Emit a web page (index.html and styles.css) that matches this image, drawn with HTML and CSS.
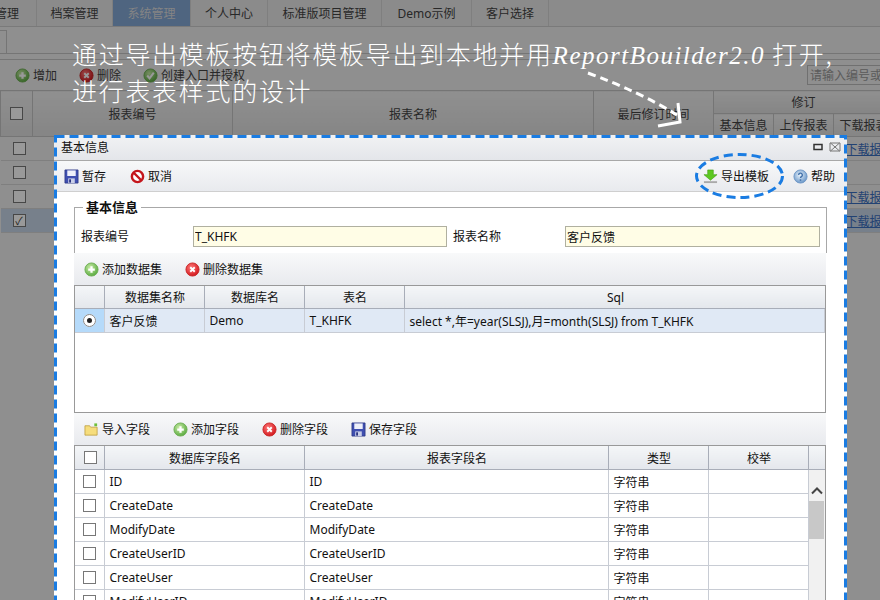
FILE: index.html
```html
<!DOCTYPE html>
<html lang="zh-CN">

<head>
    <meta charset="UTF-8">
    <title>基本信息</title>
    <link rel="stylesheet" href="styles.css">
</head>

<body>
    <svg class="icon-defs" width="0" height="0">
        <defs>
            <radialGradient id="g-green" cx="40%" cy="35%" r="70%">
                <stop offset="0" stop-color="#c8eba6"/>
                <stop offset="1" stop-color="#55a83c"/>
            </radialGradient>
            <radialGradient id="g-red" cx="40%" cy="35%" r="70%">
                <stop offset="0" stop-color="#f77"/>
                <stop offset="1" stop-color="#d0141a"/>
            </radialGradient>
            <radialGradient id="g-blue" cx="45%" cy="40%" r="65%">
                <stop offset="0" stop-color="#e8f2fb"/>
                <stop offset="1" stop-color="#5f8fc4"/>
            </radialGradient>
            <symbol id="i-add" viewBox="0 0 16 16">
                <circle cx="8" cy="8" r="7" fill="url(#g-green)" stroke="#6faf55"/>
                <path d="M8 4.5v7M4.5 8h7" stroke="#fff" stroke-width="2.4"/>
            </symbol>
            <symbol id="i-del" viewBox="0 0 16 16">
                <circle cx="8" cy="8" r="7" fill="url(#g-red)" stroke="#c92a2a"/>
                <path d="M5.6 5.6l4.8 4.8M10.4 5.6l-4.8 4.8" stroke="#fff" stroke-width="2"/>
            </symbol>
            <symbol id="i-ok" viewBox="0 0 16 16">
                <circle cx="8" cy="8" r="7" fill="url(#g-green)" stroke="#6faf55"/>
                <path d="M4.5 8l2.5 3 4.5-6" fill="none" stroke="#fff" stroke-width="2.2"/>
            </symbol>
            <symbol id="i-save" viewBox="0 0 16 16">
                <path d="M1 1h14v14H1z" fill="#3f4fb0" stroke="#2a3480" stroke-width=".8"/>
                <path d="M3.5 1.5h9v6h-9z" fill="#eef0fa"/>
                <path d="M4.5 10h7v5h-7z" fill="#c9cfe8"/>
                <path d="M5.5 11h2v3.500h-2z" fill="#2a3480"/>
            </symbol>
            <symbol id="i-cancel" viewBox="0 0 16 16">
                <circle cx="8" cy="8" r="6" fill="#fff" stroke="#c4161c" stroke-width="2.600"/>
                <path d="M4 4l8 8" stroke="#c4161c" stroke-width="2.600"/>
            </symbol>
            <symbol id="i-export" viewBox="0 0 16 16">
                <path d="M5 1h6v5h4l-7 6-7-6h4z" fill="#5cc820" stroke="#3f9a10" stroke-width=".6"/>
                <path d="M1 13h14v2H1z" fill="#a9a9a9"/>
            </symbol>
            <symbol id="i-help" viewBox="0 0 16 16">
                <circle cx="8" cy="8" r="7" fill="url(#g-blue)" stroke="#6f97c6"/>
                <path d="M6 6.500a2 2 0 1 1 3 1.700c-.7.4-1 .8-1 1.500" fill="none" stroke="#3f6ea8" stroke-width="1.400"/>
                <path d="M7.200 11h1.600v1.600H7.200z" fill="#3f6ea8"/>
            </symbol>
            <symbol id="i-folder" viewBox="0 0 16 16">
                <path d="M1 4h5l1 1.500h7V14H1z" fill="#f6dd7c" stroke="#b99a3a" stroke-width=".8"/>
                <path d="M11 1.500h3v3h-3z" fill="#6fbf3a"/>
            </symbol>
        </defs>
    </svg>

    <!-- page behind the dialog -->
    <div class="page">
        <nav class="main-tabs">
            <a class="main-tab tab-cut">管理</a>
            <a class="main-tab tab-76">档案管理</a>
            <a class="main-tab tab-78 active">系统管理</a>
            <a class="main-tab tab-77">个人中心</a>
            <a class="main-tab tab-114">标准版项目管理</a>
            <a class="main-tab tab-90">Demo示例</a>
            <a class="main-tab tab-77">客户选择</a>
        </nav>
        <div class="sub-tabs"><span class="sub-tab"></span></div>
        <div class="page-toolbar">
            <span class="tool"><svg class="ico"><use href="#i-add"/></svg>增加</span>
            <span class="tool"><svg class="ico"><use href="#i-del"/></svg>删除</span>
            <span class="tool"><svg class="ico"><use href="#i-ok"/></svg>创建入口并授权</span>
            <input class="search" placeholder="请输入编号或">
        </div>
        <table class="page-grid">
            <colgroup>
                <col class="pc-check"><col class="pc-no"><col class="pc-name"><col class="pc-time">
                <col class="pc-sub"><col class="pc-sub"><col class="pc-sub">
            </colgroup>
            <thead>
                <tr>
                    <th rowspan="2"><span class="check"></span></th>
                    <th rowspan="2">报表编号</th>
                    <th rowspan="2">报表名称</th>
                    <th rowspan="2">最后修订时间</th>
                    <th colspan="3">修订</th>
                </tr>
                <tr><th>基本信息</th><th>上传报表</th><th>下载报表</th></tr>
            </thead>
            <tbody>
                <tr><td><span class="check"></span></td><td></td><td></td><td></td><td></td><td></td><td><a class="dl">下载报表</a></td></tr>
                <tr><td><span class="check"></span></td><td></td><td></td><td></td><td></td><td></td><td></td></tr>
                <tr><td><span class="check"></span></td><td></td><td></td><td></td><td></td><td></td><td><a class="dl">下载报表</a></td></tr>
                <tr class="picked"><td><span class="check">✓</span></td><td></td><td></td><td></td><td></td><td></td><td><a class="dl">下载报表</a></td></tr>
            </tbody>
        </table>
    </div>
    <div class="mask"></div>

    <!-- dialog -->
    <section class="dialog">
        <header class="dialog-title">
            <span>基本信息</span>
            <span class="win-btns">
                <svg width="10" height="10" viewBox="0 0 10 10"><path d="M1 2.500h8v5H1z" fill="none" stroke="#333" stroke-width="1.500"/></svg>
                <svg width="12" height="10" viewBox="0 0 12 10"><path d="M1.500 1l9 8M10.500 1l-9 8M1 1h10v8H1z" fill="none" stroke="#777"/></svg>
            </span>
        </header>
        <div class="dialog-toolbar">
            <span class="tool"><svg class="ico"><use href="#i-save"/></svg>暂存</span>
            <span class="tool"><svg class="ico"><use href="#i-cancel"/></svg>取消</span>
            <span class="spacer"></span>
            <span class="tool"><svg class="ico"><use href="#i-export"/></svg>导出模板</span>
            <span class="tool"><svg class="ico"><use href="#i-help"/></svg>帮助</span>
        </div>
        <div class="dialog-body">
            <fieldset class="info">
                <legend>基本信息</legend>
                <div class="info-row">
                    <label class="info-label">报表编号</label>
                    <input class="info-input" value="T_KHFK">
                    <label class="info-label">报表名称</label>
                    <input class="info-input" value="客户反馈">
                </div>
            </fieldset>

            <div class="grid-toolbar">
                <span class="tool"><svg class="ico"><use href="#i-add"/></svg>添加数据集</span>
                <span class="tool"><svg class="ico"><use href="#i-del"/></svg>删除数据集</span>
            </div>
            <div class="dataset">
                <table class="grid">
                    <colgroup>
                        <col class="c-check"><col class="c-100"><col class="c-100"><col class="c-100"><col>
                    </colgroup>
                    <thead>
                        <tr><th></th><th>数据集名称</th><th>数据库名</th><th>表名</th><th>Sql</th></tr>
                    </thead>
                    <tbody>
                        <tr class="selected">
                            <td class="radio-cell"><span class="radio"></span></td>
                            <td>客户反馈</td>
                            <td>Demo</td>
                            <td>T_KHFK</td>
                            <td>select *,年=year(SLSJ),月=month(SLSJ) from T_KHFK</td>
                        </tr>
                    </tbody>
                </table>
            </div>

            <div class="grid-toolbar">
                <span class="tool"><svg class="ico"><use href="#i-folder"/></svg>导入字段</span>
                <span class="tool"><svg class="ico"><use href="#i-add"/></svg>添加字段</span>
                <span class="tool"><svg class="ico"><use href="#i-del"/></svg>删除字段</span>
                <span class="tool"><svg class="ico"><use href="#i-save"/></svg>保存字段</span>
            </div>
            <div class="fields">
                <table class="grid fields-table">
                    <colgroup>
                        <col class="c-check"><col class="c-200"><col class="c-304"><col class="c-100"><col class="c-100">
                    </colgroup>
                    <thead>
                        <tr><th><span class="check"></span></th><th>数据库字段名</th><th>报表字段名</th><th>类型</th><th>校举</th></tr>
                    </thead>
                    <tbody>
                        <tr><td class="check-cell"><span class="check"></span></td><td>ID</td><td>ID</td><td>字符串</td><td></td></tr>
                        <tr><td class="check-cell"><span class="check"></span></td><td>CreateDate</td><td>CreateDate</td><td>字符串</td><td></td></tr>
                        <tr><td class="check-cell"><span class="check"></span></td><td>ModifyDate</td><td>ModifyDate</td><td>字符串</td><td></td></tr>
                        <tr><td class="check-cell"><span class="check"></span></td><td>CreateUserID</td><td>CreateUserID</td><td>字符串</td><td></td></tr>
                        <tr><td class="check-cell"><span class="check"></span></td><td>CreateUser</td><td>CreateUser</td><td>字符串</td><td></td></tr>
                        <tr><td class="check-cell"><span class="check"></span></td><td>ModifyUserID</td><td>ModifyUserID</td><td>字符串</td><td></td></tr>
                    </tbody>
                </table>
                <div class="scrollbar">
                    <div class="scroll-head"></div>
                    <svg class="scroll-up" width="12" height="8" viewBox="0 0 12 8"><path d="M1 6.500l5-5 5 5" fill="none" stroke="#444" stroke-width="2"/></svg>
                    <div class="scroll-thumb"></div>
                </div>
            </div>
        </div>
    </section>

    <!-- tutorial marks drawn over the screenshot -->
    <svg class="marks" width="880" height="600" viewBox="0 0 880 600">
        <rect x="55.500" y="136.500" width="790" height="480" fill="none" stroke="#1a7ce2" stroke-width="3" stroke-dasharray="9 5"/>
        <ellipse cx="739.500" cy="176" rx="43" ry="21.500" fill="none" stroke="#1a7ce2" stroke-width="3" stroke-dasharray="9 5"/>
        <path d="M588 73Q640 92 677 115" fill="none" stroke="#fff" stroke-width="3" stroke-dasharray="8 5"/>
        <path d="M658 126L680 122L678 103" fill="none" stroke="#fff" stroke-width="3"/>
    </svg>
    <p class="note">通过导出模板按钮将模板导出到本地并用<em>ReportBouilder2.0</em> 打开,<br>进行表表样式的设计</p>
</body>

</html>
```

FILE: styles.css
```css
html, body {
    height: 600px;
    margin: 0;
    overflow: hidden;
}

body {
    position: relative;
    background: #eee;
    color: #111;
    font-family: "Noto Sans", "Noto Sans CJK SC", sans-serif;
    font-size: 12px;
}

.icon-defs {
    position: absolute;
}

/* page behind */
.main-tabs {
    display: flex;
    box-sizing: border-box;
    height: 27px;
    background: #e8e8e8;
    border-bottom: 1px solid #ccc;
}

.main-tab {
    display: flex;
    align-items: center;
    justify-content: center;
    box-sizing: border-box;
    border-right: 1px solid #d4d4d4;
    color: #444;
    white-space: nowrap;
    overflow: hidden;
}

.tab-cut { width: 37px; justify-content: flex-end; padding-right: 17px; }
.tab-76 { width: 76px; }
.tab-78 { width: 78px; }
.tab-77 { width: 77px; }
.tab-114 { width: 114px; }
.tab-90 { width: 90px; }

.main-tab.active {
    background: #84a8d5;
    color: #ddd;
}

.sub-tabs {
    height: 23px;
    padding-top: 3px;
    margin-bottom: 5px;
    border-bottom: 1px solid #c4c4c4;
}

.sub-tab {
    display: block;
    width: 7px;
    height: 24px;
    border: 1px solid #c4c4c4;
    border-left: 0;
    box-sizing: border-box;
}

.page-toolbar {
    display: flex;
    align-items: center;
    gap: 22px;
    box-sizing: border-box;
    height: 31px;
    padding-left: 15px;
    border-top: 1px solid #c4c4c4;
    color: #444;
}

.search {
    margin-left: auto;
    margin-right: -5px;
    width: 72px;
    height: 18px;
    padding: 0 2px;
    border: 1px solid #bbb;
    background: transparent;
    font: inherit;
}

.search::placeholder {
    color: #999;
}

.page-grid {
    width: 893px;
    border-collapse: collapse;
    table-layout: fixed;
    color: #444;
}

.pc-check { width: 32px; }
.pc-no { width: 200px; }
.pc-name { width: 361px; }
.pc-time { width: 120px; }
.pc-sub { width: 60px; }

.page-grid th {
    height: 22px;
    border: 1px solid #c4c4c4;
    background: linear-gradient(#f0f0f0, #dedede);
    font-weight: normal;
    padding: 0;
}

.page-grid td {
    height: 23px;
    border-bottom: 1px solid #d4d4d4;
    padding: 0 0 0 12px;
}

.page-grid th .check {
    margin: auto;
}

.page-grid .picked td {
    background: #c6d6e8;
}

.dl {
    color: #3a6ec0;
    text-decoration: underline;
}

.mask {
    position: absolute;
    inset: 0;
    background: rgba(0, 0, 0, .4);
}

/* dialog */
.dialog {
    position: absolute;
    left: 54px;
    top: 135px;
    width: 793px;
    height: 465px;
    overflow: hidden;
    background: #fff;
}

.dialog-title {
    display: flex;
    align-items: center;
    justify-content: space-between;
    box-sizing: border-box;
    height: 26px;
    padding: 0 6px 2px 7px;
    background: linear-gradient(#f1f2f4, #e4e6ea);
    border-bottom: 1px solid #a8a8a8;
}

.win-btns {
    display: flex;
    align-items: center;
    gap: 6px;
}

.tool {
    display: inline-flex;
    align-items: center;
    gap: 3px;
    white-space: nowrap;
}

.ico {
    width: 15px;
    height: 15px;
    flex: none;
}

.dialog-toolbar {
    display: flex;
    align-items: center;
    gap: 24px;
    box-sizing: border-box;
    height: 31px;
    padding: 0 12px 0 10px;
    background: linear-gradient(#f7f8f9, #e8eaee);
    border-bottom: 1px solid #cfcfcf;
}

.spacer {
    flex: 1;
}

.dialog-body {
    padding: 7px 21px 0 20px;
}

.info {
    box-sizing: border-box;
    height: 54px;
    margin: 0;
    padding: 0 6px;
    border: 1px solid #a8a8a8;
    border-bottom: 0;
}

.info legend {
    margin-left: 2px;
    padding: 0 3px;
    font-size: 13px;
    line-height: 16px;
    font-weight: bold;
}

.info-row {
    display: grid;
    grid-template-columns: 112px 260px 112px 255px;
    align-items: center;
    margin-top: 11px;
}

.info-label {
    line-height: 20px;
}

.info-input {
    box-sizing: border-box;
    height: 21px;
    padding: 0 1px;
    border: 1px solid #b0b0a0;
    background: #fffde6;
    font: inherit;
    color: #111;
    margin-right: 6px;
}

.info-row .info-input:last-child {
    margin-right: 0;
}

.grid-toolbar {
    display: flex;
    align-items: center;
    gap: 23px;
    box-sizing: border-box;
    height: 32px;
    padding-left: 10px;
    background: linear-gradient(#f8f9fa, #e8eaee);
}

.dataset {
    box-sizing: border-box;
    height: 128px;
    border: 1px solid #999;
}

.grid {
    width: 100%;
    border-collapse: collapse;
    table-layout: fixed;
}

.c-check { width: 29px; }
.c-100 { width: 100px; }
.c-200 { width: 200px; }
.c-304 { width: 304px; }

.grid th {
    height: 22px;
    padding: 0 0 0 2px;
    border-right: 1px solid #a8adb8;
    border-bottom: 1px solid #a8adb8;
    background: linear-gradient(#f4f6f8, #e4e7ec);
    font-weight: normal;
}

.grid th:last-child {
    border-right: 0;
}

.grid td {
    height: 23px;
    padding: 0 4px 0 5px;
    border-right: 1px solid #c8ccd4;
    border-bottom: 1px solid #c8ccd4;
    white-space: nowrap;
    overflow: hidden;
}

.selected td {
    background: #e0e9f5;
}

.selected .radio-cell {
    background: #b5dafa;
    padding: 0;
}

.radio {
    display: block;
    box-sizing: border-box;
    width: 13px;
    height: 13px;
    margin: auto;
    border: 4px solid #fff;
    border-radius: 50%;
    background: #222;
    outline: 1px solid #888;
    outline-offset: -1px;
}

.check {
    display: block;
    box-sizing: border-box;
    width: 13px;
    height: 13px;
    border: 1px solid #777;
    background: #fff;
    font-size: 11px;
    line-height: 11px;
    text-align: center;
}

.check-cell {
    padding: 0 !important;
}

.grid .check {
    margin: auto;
}

.fields {
    display: flex;
    border: 1px solid #999;
    border-bottom: 0;
}

.fields-table {
    width: 733px;
    flex: none;
}

.fields-table th {
    height: 23px;
}

.fields-table th:last-child {
    border-right: 1px solid #a8adb8;
}

.scrollbar {
    flex: 1;
    background: #f1f1f1;
}

.scroll-head {
    height: 23px;
    border-bottom: 1px solid #a8adb8;
    background: linear-gradient(#f4f6f8, #e4e7ec);
}

.scroll-up {
    display: block;
    margin: 17px auto 6px;
}

.scroll-thumb {
    width: 15px;
    height: 38px;
    margin: 0 auto;
    background: #c8c8c8;
}

/* tutorial marks */
.marks {
    position: absolute;
    left: 0;
    top: 0;
}

.note {
    position: absolute;
    left: 72px;
    top: 36px;
    margin: 0;
    color: #fff;
    font-family: "Noto Sans CJK SC", sans-serif;
    font-size: 25px;
    font-weight: 300;
    line-height: 35px;
    letter-spacing: 1.7px;
    white-space: nowrap;
}

.note em {
    font-family: "Liberation Serif", serif;
    letter-spacing: 1.5px;
}
```
